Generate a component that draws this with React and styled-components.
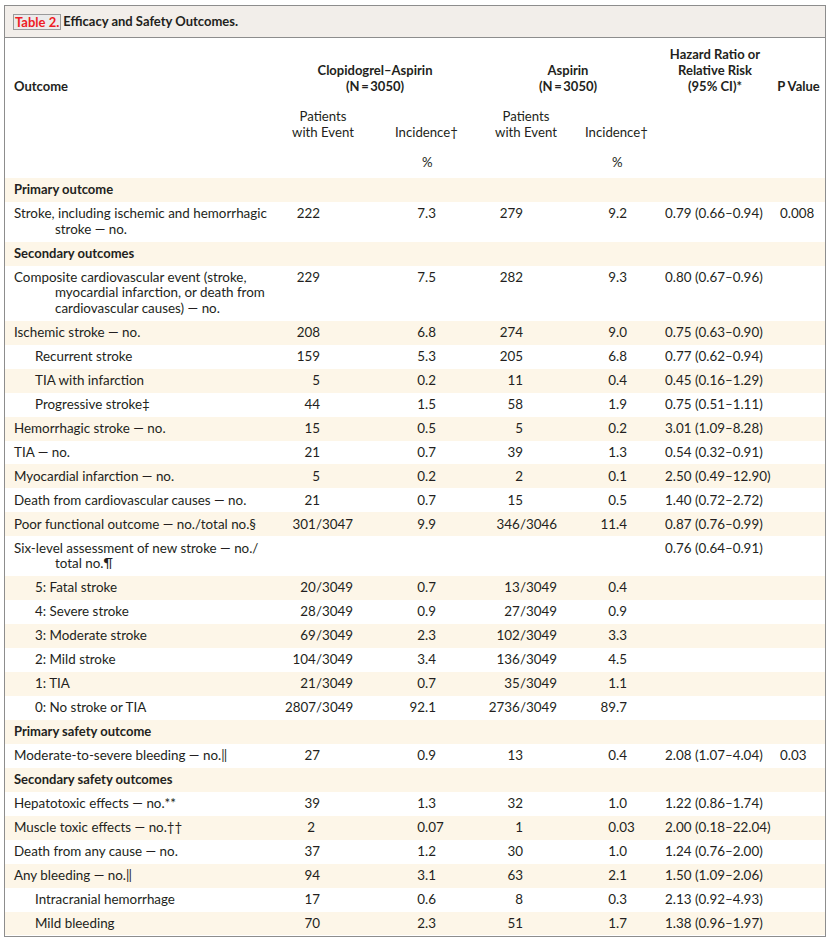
import React from 'react';
import styled, { createGlobalStyle } from 'styled-components';

const GlobalStyle = createGlobalStyle`
  body {
    margin: 0;
    background: #fff;
    color: #231f20;
    font-family: Lato, "Liberation Sans", sans-serif;
  }
`;

const COLS = '280px 80px 105px 100px 85px 115px 55px';

const Frame = styled.div`
  box-sizing: border-box;
  width: 822px;
  margin: 5px 0 0 4px;
  padding-bottom: 1px;
  border: 1px solid #8d8d8d;
  font-size: 13.4px;
  line-height: 15.6px;
`;

const TitleBar = styled.div`
  height: 31px;
  display: flex;
  align-items: center;
  padding-left: 8px;
  background: #f2eeea;
  border-bottom: 1px solid #8d8d8d;
  font-size: 13px;
  font-weight: 700;
`;

const TableTag = styled.span`
  color: #ee1c25;
  background: #ebebeb;
  border: 1px solid #9a9a9a;
  padding: 0 1px;
  margin-right: 2px;
  line-height: 14px;
`;

const Head = styled.div`
  display: grid;
  grid-template-columns: ${COLS};
  grid-template-rows: 48px 32px 16px;
  row-gap: 14px;
  padding: 8px 0;
  line-height: 16px;
`;

const HeadCell = styled.div`
  grid-column: ${p => p.$col};
  grid-row: ${p => p.$row};
  align-self: end;
  text-align: ${p => p.$align || 'center'};
  font-size: ${p => (p.$bold ? 13 : 13.2)}px;
  font-weight: ${p => (p.$bold ? 700 : 400)};
  padding-left: ${p => p.$pl || 0}px;
  padding-right: ${p => p.$pr || 0}px;
  white-space: nowrap;
`;

const Row = styled.div`
  display: grid;
  grid-template-columns: ${COLS};
  padding: 4.2px 0;
  background: ${p => (p.$shade ? '#fdf6e8' : '#fff')};
`;

const Section = styled.div`
  grid-column: 1 / -1;
  padding-left: 9px;
  font-size: 13px;
  font-weight: 700;
`;

const Label = styled.div`
  padding-left: ${p => (p.$sub ? 30 : 50)}px;
  text-indent: ${p => (p.$sub ? 0 : -41)}px;
  white-space: nowrap;
`;

const Count = styled.div`
  text-align: right;
  padding-right: ${p => p.$pr}px;
  white-space: nowrap;
`;

const Decimal = styled.div`
  display: flex;
  white-space: nowrap;
`;

const IntPart = styled.span`
  flex: none;
  width: ${p => p.$w}px;
  text-align: right;
`;

const Stat = styled.div`
  padding-left: ${p => p.$pl}px;
  white-space: nowrap;
`;

const rows = [
  { section: 'Primary outcome' },
  { label: ['Stroke, including ischemic and hemorrhagic', 'stroke — no.'], a: '222', b: '7.3', c: '279', d: '9.2', hr: '0.79 (0.66–0.94)', p: '0.008' },
  { section: 'Secondary outcomes' },
  { label: ['Composite cardiovascular event (stroke,', 'myocardial infarction, or death from', 'cardiovascular causes) — no.'], a: '229', b: '7.5', c: '282', d: '9.3', hr: '0.80 (0.67–0.96)' },
  { label: 'Ischemic stroke — no.', a: '208', b: '6.8', c: '274', d: '9.0', hr: '0.75 (0.63–0.90)' },
  { label: 'Recurrent stroke', sub: true, a: '159', b: '5.3', c: '205', d: '6.8', hr: '0.77 (0.62–0.94)' },
  { label: 'TIA with infarction', sub: true, a: '5', b: '0.2', c: '11', d: '0.4', hr: '0.45 (0.16–1.29)' },
  { label: 'Progressive stroke‡', sub: true, a: '44', b: '1.5', c: '58', d: '1.9', hr: '0.75 (0.51–1.11)' },
  { label: 'Hemorrhagic stroke — no.', a: '15', b: '0.5', c: '5', d: '0.2', hr: '3.01 (1.09–8.28)' },
  { label: 'TIA — no.', a: '21', b: '0.7', c: '39', d: '1.3', hr: '0.54 (0.32–0.91)' },
  { label: 'Myocardial infarction — no.', a: '5', b: '0.2', c: '2', d: '0.1', hr: '2.50 (0.49–12.90)' },
  { label: 'Death from cardiovascular causes — no.', a: '21', b: '0.7', c: '15', d: '0.5', hr: '1.40 (0.72–2.72)' },
  { label: 'Poor functional outcome — no./total no.§', a: '301/3047', b: '9.9', c: '346/3046', d: '11.4', hr: '0.87 (0.76–0.99)' },
  { label: ['Six-level assessment of new stroke — no./', 'total no.¶'], hr: '0.76 (0.64–0.91)' },
  { label: '5: Fatal stroke', sub: true, a: '20/3049', b: '0.7', c: '13/3049', d: '0.4' },
  { label: '4: Severe stroke', sub: true, a: '28/3049', b: '0.9', c: '27/3049', d: '0.9' },
  { label: '3: Moderate stroke', sub: true, a: '69/3049', b: '2.3', c: '102/3049', d: '3.3' },
  { label: '2: Mild stroke', sub: true, a: '104/3049', b: '3.4', c: '136/3049', d: '4.5' },
  { label: '1: TIA', sub: true, a: '21/3049', b: '0.7', c: '35/3049', d: '1.1' },
  { label: '0: No stroke or TIA', sub: true, a: '2807/3049', b: '92.1', c: '2736/3049', d: '89.7' },
  { section: 'Primary safety outcome' },
  { label: 'Moderate-to-severe bleeding — no.‖', a: '27', b: '0.9', c: '13', d: '0.4', hr: '2.08 (1.07–4.04)', p: '0.03' },
  { section: 'Secondary safety outcomes' },
  { label: 'Hepatotoxic effects — no.**', a: '39', b: '1.3', c: '32', d: '1.0', hr: '1.22 (0.86–1.74)' },
  { label: 'Muscle toxic effects — no.††', a: '2', aPr: 50, b: '0.07', c: '1', d: '0.03', hr: '2.00 (0.18–22.04)' },
  { label: 'Death from any cause — no.', a: '37', b: '1.2', c: '30', d: '1.0', hr: '1.24 (0.76–2.00)' },
  { label: 'Any bleeding — no.‖', a: '94', b: '3.1', c: '63', d: '2.1', hr: '1.50 (1.09–2.06)' },
  { label: 'Intracranial hemorrhage', sub: true, a: '17', b: '0.6', c: '8', d: '0.3', hr: '2.13 (0.92–4.93)' },
  { label: 'Mild bleeding', sub: true, a: '70', b: '2.3', c: '51', d: '1.7', hr: '1.38 (0.96–1.97)' },
];

// counts and fractions sit on different right edges in the source table
const countPad = (v, frac, plain) => (v && v.includes('/') ? frac : plain);

function Dec({ value, w }) {
  if (!value) return <Decimal />;
  const [i, f] = value.split('.');
  return (
    <Decimal>
      <IntPart $w={w}>{i}</IntPart>
      <span>.{f}</span>
    </Decimal>
  );
}

function Lines({ text }) {
  if (!Array.isArray(text)) return text;
  return text.map((t, i) => (
    <React.Fragment key={i}>
      {i > 0 && <br />}
      {t}
    </React.Fragment>
  ));
}

export default function App() {
  return (
    <>
      <GlobalStyle />
      <Frame>
        <TitleBar>
          <TableTag>Table 2.</TableTag>Efficacy and Safety Outcomes.
        </TitleBar>
        <Head>
          <HeadCell $col="1" $row="1" $align="left" $pl={9} $bold>Outcome</HeadCell>
          <HeadCell $col="2 / span 2" $row="1" $pr={5} $bold>Clopidogrel–Aspirin<br />(N{'\u2009'}={'\u2009'}3050)</HeadCell>
          <HeadCell $col="4 / span 2" $row="1" $pl={11} $bold>Aspirin<br />(N{'\u2009'}={'\u2009'}3050)</HeadCell>
          <HeadCell $col="6" $row="1" $pl={5} $bold>Hazard Ratio or<br />Relative Risk<br />(95% CI)*</HeadCell>
          <HeadCell $col="7" $row="1" $pl={2} $bold>P Value</HeadCell>
          <HeadCell $col="2" $row="2" $pr={4}>Patients<br />with Event</HeadCell>
          <HeadCell $col="3" $row="2" $align="left" $pl={30}>Incidence†</HeadCell>
          <HeadCell $col="4" $row="2" $pl={12}>Patients<br />with Event</HeadCell>
          <HeadCell $col="5" $row="2" $align="left" $pl={15}>Incidence†</HeadCell>
          <HeadCell $col="3" $row="3" $align="left" $pl={57}>%</HeadCell>
          <HeadCell $col="5" $row="3" $align="left" $pl={42}>%</HeadCell>
        </Head>
        {rows.map((r, i) =>
          r.section ? (
            <Row key={i} $shade={i % 2 === 0}>
              <Section>{r.section}</Section>
            </Row>
          ) : (
            <Row key={i} $shade={i % 2 === 0}>
              <Label $sub={r.sub}><Lines text={r.label} /></Label>
              <Count $pr={r.aPr || countPad(r.a, 12, 45)}>{r.a}</Count>
              <Dec value={r.b} w={60} />
              <Count $pr={countPad(r.c, 13, 47)}>{r.c}</Count>
              <Dec value={r.d} w={46} />
              <Stat $pl={10}>{r.hr}</Stat>
              <Stat $pl={10}>{r.p}</Stat>
            </Row>
          )
        )}
      </Frame>
    </>
  );
}
